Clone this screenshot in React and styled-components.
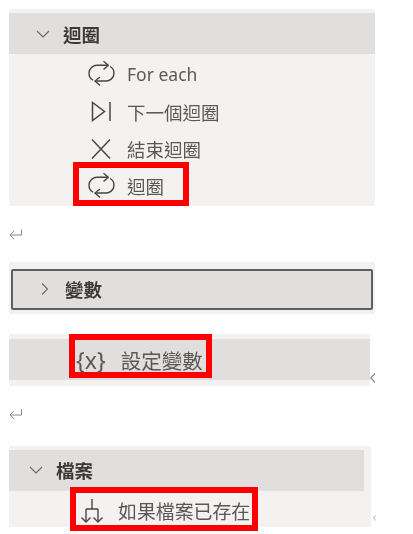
import React from 'react'
import styled, { createGlobalStyle } from 'styled-components'

const GlobalStyle = createGlobalStyle`
  html, body {
    margin: 0;
    background: #fff;
  }
  body {
    font-family: "Noto Sans", "Noto Sans CJK TC", sans-serif;
    color: #484644;
  }
`

const LoopIcon = () => (
  <svg width="28" height="26" viewBox="0 0 28 26" fill="none" stroke="#484644" strokeWidth="1.4">
    <path d="M5 19C2.500 18 1 15 1 12 1 7.500 5 4.300 9 4.300H20" />
    <path d="M22 5.500C24.800 7 26 9.500 26 12 26 17 22 20 18 20H7" />
    <path d="M15.500 0.300 20.300 4.300 15.500 8.500" />
    <path d="M12 16 7 20 12 24.500" />
  </svg>
)

const NextIcon = () => (
  <svg width="28" height="26" viewBox="0 0 28 26" fill="none" stroke="#484644" strokeWidth="1.5">
    <path d="M4.500 3.500v18L16.500 12.500z" />
    <path d="M22 3v19" />
  </svg>
)

const CloseIcon = () => (
  <svg width="28" height="26" viewBox="0 0 28 26" fill="none" stroke="#484644" strokeWidth="1.5">
    <path d="M4 3.500 22 22.500M22 3.500 4 22.500" />
  </svg>
)

const BranchIcon = () => (
  <svg width="24" height="26" viewBox="0 0 24 26" fill="none" stroke="#484644" strokeWidth="1.4">
    <path d="M12 1v10M6 11h12M6 11v13M18 11v13" />
    <path d="M1.500 19.500 6 24l4.500-4.500M13.500 19.500 18 24l4.500-4.500" />
  </svg>
)

const Chevron = ({ open }) => (
  <svg width="14" height="14" viewBox="0 0 14 14" fill="none" stroke="#6b6967" strokeWidth="1.1">
    <path d={open ? 'M1 4 7 10 13 4' : 'M4 1.500 9.500 7 4 12.500'} />
  </svg>
)

const ReturnMark = ({ gap }) => (
  <ReturnLine $gap={gap}>
    <svg width="14" height="12" viewBox="0 0 14 12" fill="none" stroke="#8a8886" strokeWidth="1">
      <path d="M12.500 0.500v5.500H1M5 2 1 6l4 4" />
    </svg>
  </ReturnLine>
)

const ClippedMark = ({ small }) => (
  <Tick $small={small}>
    <svg width="5" height="10" viewBox="0 0 5 10" fill="none" stroke="#8a8886" strokeWidth="1.2">
      <path d="M5 0.500 0.800 5 5 9.500" />
    </svg>
  </Tick>
)

export default function App() {
  return (
    <Page>
      <GlobalStyle />

      <Panel $top={4} $bottom={0}>
        <Header $indent={27}>
          <Chevron open />
          <Title>迴圈</Title>
        </Header>
        <Rows>
          <Row><LoopIcon /><Label $size={17.5}>For each</Label></Row>
          <Row><NextIcon /><Label>下一個迴圈</Label></Row>
          <Row><CloseIcon /><Label>結束迴圈</Label></Row>
          <Row>
            <Marked $left={-9} $pad={9} $gap={11} $width={104} $shift={4}>
              <LoopIcon />
              <Label>迴圈</Label>
            </Marked>
          </Row>
        </Rows>
      </Panel>

      <ReturnMark gap={23} />

      <Panel $top={7} $bottom={4} $gapTop={21}>
        <Header $indent={25} $focused>
          <Chevron />
          <Title>變數</Title>
        </Header>
      </Panel>

      <ShortPanel>
        <Band>
          <Marked $pad={1} $gap={15} $width={131} $shift={8}>
            <Braces>{'{x}'}</Braces>
            <Label $size={20.5}>設定變數</Label>
          </Marked>
        </Band>
        <ClippedMark />
      </ShortPanel>

      <ReturnMark gap={23} />

      <FilePanel>
        <FileHeader>
          <Chevron open />
          <Title>檔案</Title>
        </FileHeader>
        <FileRow>
          <Marked $pad={4} $gap={14} $width={176} $shift={4}>
            <BranchIcon />
            <Label $size={18.9}>如果檔案已存在</Label>
          </Marked>
        </FileRow>
        <ClippedMark small />
      </FilePanel>
    </Page>
  )
}

const Page = styled.div`
  width: 413px;
  height: 534px;
  padding: 9px 0 0 9px;
  box-sizing: border-box;
  overflow: hidden;
`

const Panel = styled.section`
  width: 366px;
  margin-top: ${props => props.$gapTop || 0}px;
  padding: ${props => props.$top}px 0 ${props => props.$bottom}px;
  background: #f3f2f1;
`

const Header = styled.div`
  display: flex;
  align-items: center;
  gap: 13px;
  height: ${props => (props.$focused ? 37 : 41)}px;
  padding-left: ${props => props.$indent}px;
  background: #e1dfdd;
  ${props => props.$focused && `
    margin: 0 2px;
    border: 2px solid #605e5c;
    border-radius: 2px;
  `}
`

const Title = styled.span`
  font-size: 18.5px;
  font-weight: 700;
  color: #3b3a39;
  filter: blur(0.3px);
`

const Rows = styled.div`
  padding: 1px 0 0 79px;
`

const Row = styled.div`
  display: flex;
  align-items: center;
  gap: 11px;
  height: 37.7px;
`

const Label = styled.span`
  font-size: ${props => props.$size || 18.5}px;
  color: #5a5856;
  white-space: nowrap;
  filter: blur(0.3px);
`

// red annotation box: the outline stays out of the layout, $shift keeps the
// content where it sat before the box was drawn around it
const Marked = styled.div`
  display: flex;
  align-items: center;
  flex: none;
  align-self: flex-start;
  gap: ${props => props.$gap}px;
  box-sizing: border-box;
  width: ${props => props.$width}px;
  height: 32px;
  margin-left: ${props => props.$left || 0}px;
  padding: ${props => props.$shift}px 0 0 ${props => props.$pad}px;
  outline: 6px solid #ff0000;
`

const ReturnLine = styled.div`
  display: flex;
  height: 12px;
  margin-top: ${props => props.$gap}px;
`

const ShortPanel = styled.section`
  position: relative;
  width: 361px;
  margin-top: 20px;
  padding: 5px 0 6px;
  background: #f3f2f1;
`

const Band = styled.div`
  display: flex;
  height: 40px;
  padding: 1px 0 0 66px;
  background: #e1dfdd;
`

const Braces = styled.span`
  font-size: 23px;
  line-height: 32px;
  color: #5a5856;
  filter: blur(0.3px);
`

const Tick = styled.span`
  position: absolute;
  right: -5px;
  bottom: ${props => (props.$small ? 4 : 3)}px;
  display: flex;
  width: ${props => (props.$small ? 3 : 5)}px;
  overflow: hidden;
  justify-content: flex-end;
`

const FilePanel = styled.section`
  position: relative;
  width: 362px;
  margin-top: 25px;
  padding-top: 4px;
  background: #f3f2f1;
`

const FileHeader = styled.div`
  display: flex;
  align-items: center;
  gap: 13px;
  width: 355px;
  height: 41px;
  padding-left: 20px;
  box-sizing: border-box;
  background: #e1dfdd;
`

const FileRow = styled.div`
  display: flex;
  height: 34px;
  padding: 2px 0 0 67px;
`
